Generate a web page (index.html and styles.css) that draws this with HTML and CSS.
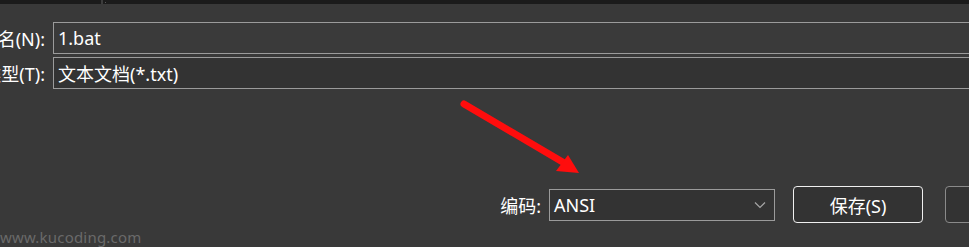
FILE: index.html
```html
<!DOCTYPE html>
<html lang="zh-CN">
<head>
<meta charset="utf-8">
<title>另存为</title>
<link rel="stylesheet" href="styles.css">
</head>
<body>
<div class="dialog">
  <div class="topbar">
    <div class="topcell"></div>
    <div class="topcell-rest"><span class="dot"></span></div>
  </div>
  <div class="fields">
    <div class="field">
      <div class="label"><span>文件名(N):</span></div>
      <div class="input input-edit">1.bat</div>
    </div>
    <div class="field">
      <div class="label"><span>保存类型(T):</span></div>
      <div class="input input-combo">文本文档(*.txt)</div>
    </div>
  </div>
  <div class="spacer"></div>
  <div class="footer">
    <span class="enc-label">编码:</span>
    <div class="combo">
      <span>ANSI</span>
      <svg class="chev" width="12" height="8" viewBox="0 0 12 8"><polyline points="1,1.5 6,6.5 11,1.5" fill="none" stroke="#a6a6a6" stroke-width="1.2"/></svg>
    </div>
    <button class="btn btn-default">保存(S)</button>
    <button class="btn">取消</button>
  </div>
</div>
<svg class="arrow" width="969" height="247" viewBox="0 0 969 247">
  <line x1="464" y1="104" x2="566" y2="164" stroke="#ff0d0d" stroke-width="7" stroke-linecap="round"/>
  <polygon points="579,173 568,155 556,171" fill="#ff0d0d"/>
</svg>
<div class="watermark">www.kucoding.com</div>
</body>
</html>
```
FILE: styles.css
```css
html, body {
  margin: 0;
  padding: 0;
  width: 969px;
  height: 247px;
  overflow: hidden;
  background: #393939;
  font-family: "Noto Sans", "Noto Sans CJK SC", sans-serif;
  color: #ffffff;
}
.dialog {
  display: flex;
  flex-direction: column;
  height: 247px;
  position: relative;
}
.topbar {
  display: flex;
  height: 4px;
  background: #1b1b1b;
}
.topcell {
  width: 101px;
  border-right: 2px solid #3c3c3c;
}
.topcell-rest {
  flex: 1;
  position: relative;
}
.dot {
  position: absolute;
  left: 2px;
  top: 2px;
  width: 1px;
  height: 1px;
  background: #555;
}
.fields {
  margin-top: 18px;
  display: flex;
  flex-direction: column;
  gap: 3px;
  margin-right: -30px;
}
.field {
  display: flex;
  height: 32px;
}
.label {
  width: 45px;
  margin-right: 8px;
  display: flex;
  justify-content: flex-end;
  align-items: center;
  overflow: hidden;
  white-space: nowrap;
  font-size: 18px;
}
.input {
  flex: 1;
  box-sizing: border-box;
  border: 1px solid #9b9b9b;
  display: flex;
  align-items: center;
  padding-left: 4px;
  font-size: 18px;
  white-space: nowrap;
}
.input-edit { background: #3a3a3a; }
.input-combo { background: #333333; }
.spacer { flex: 1; }
.footer {
  display: flex;
  align-items: center;
  justify-content: flex-end;
  margin-right: -106px;
  margin-bottom: 24px;
  height: 37px;
}
.enc-label {
  font-size: 18px;
  margin-right: 8px;
}
.combo {
  box-sizing: border-box;
  width: 226px;
  height: 32px;
  border: 1px solid #9b9b9b;
  background: #333333;
  display: flex;
  align-items: center;
  justify-content: space-between;
  padding: 0 8px 0 4px;
  font-size: 18px;
}
.chev { display: block; }
.btn {
  box-sizing: border-box;
  width: 130px;
  height: 37px;
  margin-left: 18px;
  border: 1px solid #8a8a8a;
  border-radius: 4px;
  background: #333333;
  color: #ffffff;
  font-family: "Noto Sans", "Noto Sans CJK SC", sans-serif;
  font-size: 18px;
  padding: 0;
}
.btn-default {
  border-color: #f0f0f0;
}
.btn + .btn { margin-left: 22px; }
.arrow {
  position: absolute;
  left: 0;
  top: 0;
  pointer-events: none;
}
.watermark {
  position: absolute;
  left: 0;
  top: 227px;
  font-size: 15px;
  color: #6a6a6a;
  letter-spacing: 0.2px;
}
```
